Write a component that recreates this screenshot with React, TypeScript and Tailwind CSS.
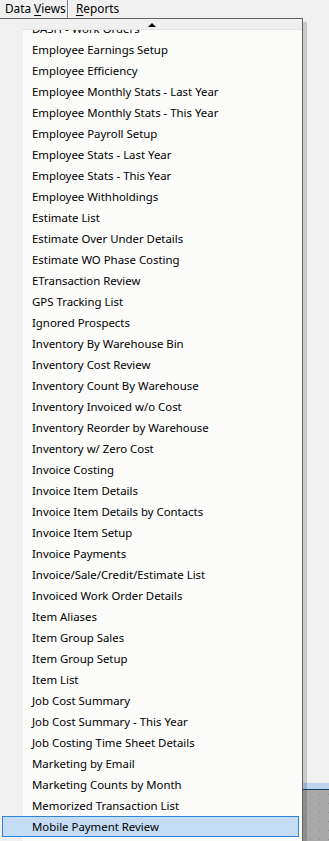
const items = [
  'DASH - Work Orders',
  'Employee Earnings Setup',
  'Employee Efficiency',
  'Employee Monthly Stats - Last Year',
  'Employee Monthly Stats - This Year',
  'Employee Payroll Setup',
  'Employee Stats - Last Year',
  'Employee Stats - This Year',
  'Employee Withholdings',
  'Estimate List',
  'Estimate Over Under Details',
  'Estimate WO Phase Costing',
  'ETransaction Review',
  'GPS Tracking List',
  'Ignored Prospects',
  'Inventory By Warehouse Bin',
  'Inventory Cost Review',
  'Inventory Count By Warehouse',
  'Inventory Invoiced w/o Cost',
  'Inventory Reorder by Warehouse',
  'Inventory w/ Zero Cost',
  'Invoice Costing',
  'Invoice Item Details',
  'Invoice Item Details by Contacts',
  'Invoice Item Setup',
  'Invoice Payments',
  'Invoice/Sale/Credit/Estimate List',
  'Invoiced Work Order Details',
  'Item Aliases',
  'Item Group Sales',
  'Item Group Setup',
  'Item List',
  'Job Cost Summary',
  'Job Cost Summary - This Year',
  'Job Costing Time Sheet Details',
  'Marketing by Email',
  'Marketing Counts by Month',
  'Memorized Transaction List',
  'Mobile Payment Review',
];

const selected = 'Mobile Payment Review';

function MenuItem({ label }: { label: string }) {
  const active = label === selected;
  return (
    <div
      className={
        active
          ? 'flex h-[21px] shrink-0 items-center ml-[2px] mr-[3px] pl-[29px] border border-[#2e86da] bg-[#c5ddf4]'
          : 'flex h-[21px] shrink-0 items-center pl-[32px]'
      }
    >
      <span className="whitespace-nowrap text-black">{label}</span>
    </div>
  );
}

export default function App() {
  return (
    <div
      className="relative flex h-[841px] w-[329px] flex-col overflow-hidden bg-[#f0f0f0] text-[11.4px] leading-none"
      style={{ fontFamily: '"Noto Sans", "Open Sans", sans-serif' }}
    >
      {/* Menu bar */}
      <div className="flex h-[18px] shrink-0 items-stretch text-[11.8px]">
        <div className="flex w-[68px] items-center border-r border-[#7c7c7c] pl-[5px]">
          Data <span className="ml-[3px] underline underline-offset-2">V</span>iews
        </div>
        <div className="flex items-center border-l border-white pl-[7px]">
          <span className="underline underline-offset-2">R</span>eports
        </div>
      </div>

      {/* Window area behind the menu */}
      <div className="h-[765px] shrink-0" />
      <div className="h-[6px] shrink-0 bg-[#bcd5ee]" />
      <div className="h-px shrink-0 bg-[#1d3f66]" />
      <div className="flex-1 bg-[#a9a9a9] bg-[radial-gradient(#8c8c8c_0.7px,transparent_0.9px)] bg-[size:9px_9px]" />

      {/* Dropdown */}
      <div className="absolute left-0 top-[18px] bottom-[-40px] w-[303px] flex flex-col border-t border-r border-[#646464] bg-[linear-gradient(to_right,#f0f0f0_23px,#fbfbfa_23px)] shadow-[4px_4px_0_rgba(0,0,0,0.16)]">
        <div className="relative h-[11px] shrink-0 bg-[#f0f0f0]">
          <div className="flex h-[10px] items-center justify-center pl-[1px] pt-[1px]">
            <svg width="8" height="4" viewBox="0 0 8 4">
              <path d="M0 4 L4 0 L8 4 Z" fill="#000" />
            </svg>
          </div>
          <div className="ml-[23px] border-b border-dotted border-[#d8d8d8]" />
        </div>
        <div className="flex-1 overflow-hidden">
          <div className="-mt-[12px] flex flex-col">
            {items.map((label) => (
              <MenuItem key={label} label={label} />
            ))}
          </div>
        </div>
      </div>
    </div>
  );
}
